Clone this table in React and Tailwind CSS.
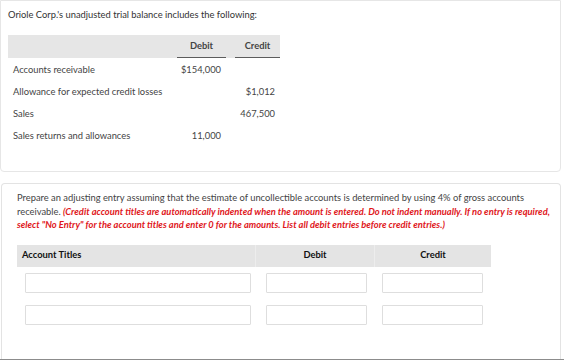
import React from 'react';

const trialRows = [
  { label: 'Accounts receivable', debit: '$154,000', credit: '' },
  { label: 'Allowance for expected credit losses', debit: '', credit: '$1,012' },
  { label: 'Sales', debit: '', credit: '467,500' },
  { label: 'Sales returns and allowances', debit: '11,000', credit: '' },
];

const entryRows = [0, 1];

export default function App() {
  return (
    <div className="w-[564px] h-[360px] overflow-hidden bg-white font-['Lato','Liberation_Sans',sans-serif] text-[9.35px] text-[#3a3a3a]">
      {/* Trial balance panel */}
      <div className="h-[172px] w-[561px] border border-[#e6e6e6] rounded-b-[4px] pl-[7px] pt-[8px]">
        <p className="leading-[12px] text-[#333]">Oriole Corp.'s unadjusted trial balance includes the following:</p>

        <div className="mt-[14px] w-[272px]">
          <div className="grid grid-cols-[169px_49px_9px_45px] h-[23px] bg-[#e6e6e6] font-bold text-[#444]">
            <div />
            <div className="flex items-center justify-center border-b border-[#5c5c5c]">Debit</div>
            <div />
            <div className="flex items-center justify-center border-b border-[#5c5c5c]">Credit</div>
          </div>
          <div className="pt-[1px]">
            {trialRows.map((row) => (
              <div key={row.label} className="grid grid-cols-[169px_49px_9px_45px] h-[22px] items-center text-[#444]">
                <span className="pl-[5px]">{row.label}</span>
                <span className="text-right pr-[5px]">{row.debit}</span>
                <span />
                <span className="text-right pr-[5px]">{row.credit}</span>
              </div>
            ))}
          </div>
        </div>
      </div>

      {/* Journal entry panel */}
      <div className="mt-[11px] ml-[1px] h-[176px] w-[560px] border-x border-t border-[#e3e3e3] rounded-t-[4px] pl-[15px] pt-[7px]">
        <p className="leading-[13.5px] whitespace-nowrap text-[#444]">
          Prepare an adjusting entry assuming that the estimate of uncollectible accounts is determined by using 4% of gross accounts
          <br />
          receivable.{' '}
          <span className="font-bold italic text-[#e0161b]">
            (Credit account titles are automatically indented when the amount is entered. Do not indent manually. If no entry is required,
          </span>
          <br />
          <span className="font-bold italic text-[#e0161b]">
            select "No Entry" for the account titles and enter 0 for the amounts. List all debit entries before credit entries.)
          </span>
        </p>

        <div className="mt-[13px] w-[474px]">
          <div className="grid grid-cols-[238px_119px_117px] h-[22px] bg-[#e4e4e4] font-bold text-[#111]">
            <div className="flex items-center pl-[5px]">Account Titles</div>
            <div className="flex items-center justify-center border-l border-[#ededed]">Debit</div>
            <div className="flex items-center justify-center border-l border-[#ededed]">Credit</div>
          </div>
          <div className="mt-[6px] flex flex-col gap-[12px]">
            {entryRows.map((i) => (
              <div key={i} className="grid grid-cols-[238px_119px_117px] h-[20px]">
                <div className="pl-[8px]">
                  <div className="h-full w-[226px] border border-[#dedede] rounded-[1px]" />
                </div>
                <div className="pl-[11px]">
                  <div className="h-full w-[101px] border border-[#dedede] rounded-[1px]" />
                </div>
                <div className="pl-[8px]">
                  <div className="h-full w-[101px] border border-[#dedede] rounded-[1px]" />
                </div>
              </div>
            ))}
          </div>
        </div>
      </div>
      <div className="h-px w-full bg-[#8c8c8c]" />
    </div>
  );
}
